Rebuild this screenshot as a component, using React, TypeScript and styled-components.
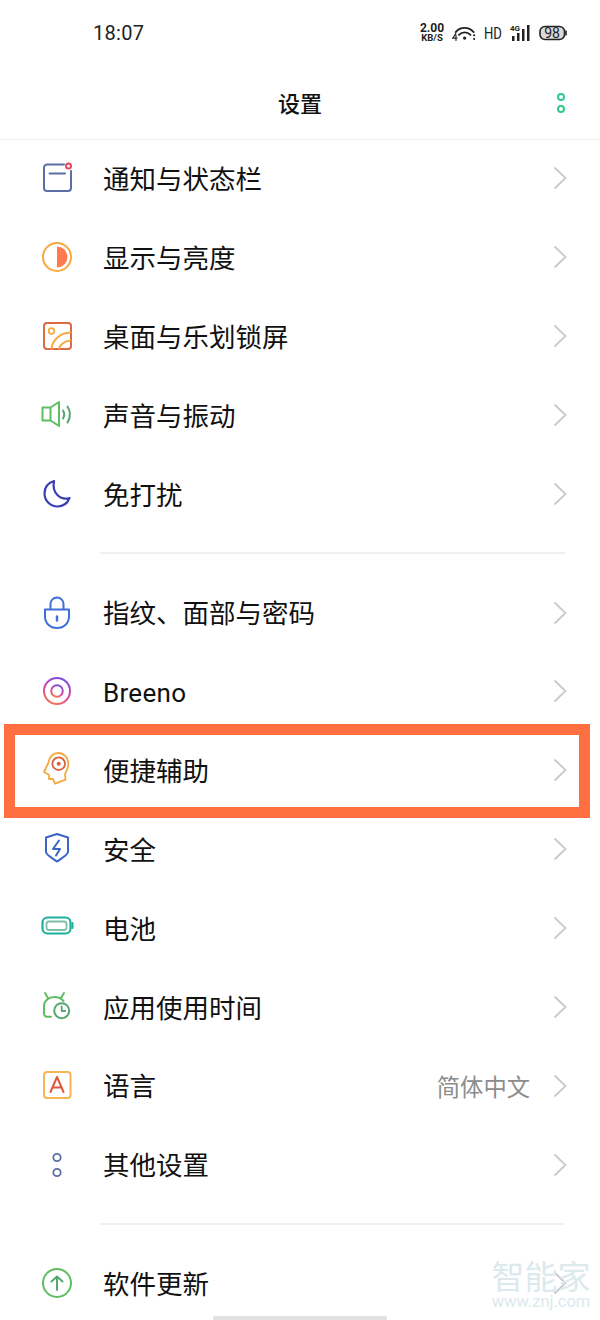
import React from 'react';
import styled, { createGlobalStyle } from 'styled-components';

const GlobalStyle = createGlobalStyle`
  html, body {
    margin: 0;
    padding: 0;
    background: #fff;
  }
`;

const CJK = `"Noto Sans CJK SC", "Noto Sans", sans-serif`;

const Screen = styled.div`
  position: relative;
  width: 600px;
  height: 1320px;
  overflow: hidden;
  background: #fff;
  font-family: ${CJK};
  color: #111;
`;

const StatusBar = styled.div`
  height: 66px;
  display: flex;
  align-items: center;
  justify-content: space-between;
  padding: 0 33px 0 93px;
  box-sizing: border-box;
`;

const Time = styled.span`
  font-family: "Roboto", sans-serif;
  font-size: 20px;
  color: #222;
  letter-spacing: 0.3px;
`;

const StatusIcons = styled.div`
  display: flex;
  align-items: center;
  gap: 8px;
`;

const Speed = styled.div`
  width: 24px;
  font-family: "Roboto", sans-serif;
  font-weight: 700;
  color: #222;
  display: flex;
  flex-direction: column;
  align-items: center;
  white-space: nowrap;
  font-size: 12px;
  line-height: 9px;
  small {
    margin-top: 1px;
    font-size: 9.5px;
    line-height: 8px;
    font-weight: 700;
  }
`;

const Hd = styled.span`
  width: 18px;
  font-family: "Roboto", sans-serif;
  font-size: 16px;
  color: #222;
  transform: scaleX(0.82);
  transform-origin: left center;
`;

const Header = styled.header`
  position: relative;
  height: 74px;
  display: flex;
  align-items: center;
  justify-content: center;
  padding-bottom: 2px;
  border-bottom: 1px solid #f1f1f1;
  box-sizing: border-box;
`;

const Title = styled.h1`
  margin: 0;
  font-size: 22px;
  font-weight: 500;
  line-height: 1;
`;

const MoreButton = styled.div`
  position: absolute;
  right: 35px;
  top: 27px;
  display: flex;
  flex-direction: column;
  gap: 4px;
  span {
    width: 8px;
    height: 8px;
    box-sizing: border-box;
    border: 2px solid #2fcb8d;
    border-radius: 50%;
  }
`;

const Row = styled.div`
  height: 78.85px;
  display: flex;
  align-items: center;
  padding: 0 33px 2px 41px;
  box-sizing: border-box;
`;

const IconBox = styled.div`
  width: 32px;
  height: 32px;
  flex: none;
  margin-right: 30px;
  svg {
    display: block;
    fill: none;
    overflow: visible;
  }
`;

const Label = styled.span`
  flex: 1;
  font-size: 26.5px;
  line-height: 1;
`;

const Latin = styled(Label)`
  padding-top: 3px;
  font-family: "Roboto", sans-serif;
  font-size: 26px;
  letter-spacing: 0.3px;
`;

const Value = styled.span`
  font-size: 23.3px;
  color: #8c8c8c;
  margin-right: 23px;
`;

const Divider = styled.div`
  height: 2px;
  margin: 18px 35px 20px 100px;
  background: #f0f0f0;
`;

const Highlight = styled.div`
  position: absolute;
  left: 4px;
  top: 724px;
  width: 586px;
  height: 94px;
  box-sizing: border-box;
  border: 11px solid #ff6f3f;
`;

const HomeBar = styled.div`
  position: absolute;
  left: 213px;
  bottom: 0;
  width: 174px;
  height: 4px;
  border-radius: 2px 2px 0 0;
  background: #e2e2e2;
`;

const Watermark = styled.div`
  position: absolute;
  left: 489px;
  top: 1258px;
  width: 104px;
  text-align: center;
  color: #dce9ed;
  span {
    display: block;
    font-size: 33px;
    line-height: 34px;
    white-space: nowrap;
  }
  small {
    display: block;
    margin-top: 1px;
    font-family: "Roboto", sans-serif;
    font-size: 16.5px;
    line-height: 18px;
    white-space: nowrap;
  }
`;

const Chevron = () => (
  <svg width="14" height="24" viewBox="0 0 14 24" fill="none" style={{ flex: 'none' }}>
    <path d="M1.5 1.5 12.5 12 1.5 22.5" stroke="#c9c9c9" strokeWidth="1.8" />
  </svg>
);

const Svg: React.FC<{ children: React.ReactNode }> = ({ children }) => (
  <svg width="32" height="32" viewBox="0 0 32 32" strokeLinecap="round" strokeLinejoin="round">
    {children}
  </svg>
);

const icons: Record<string, React.ReactNode> = {
  notify: (
    <Svg>
      <path d="M23 2.5H6a3 3 0 0 0-3 3V26a3 3 0 0 0 3 3h21a3 3 0 0 0 3-3V9" stroke="#5b6fa6" strokeWidth="2" />
      <path d="M8.5 11.5H24" stroke="#5b6fa6" strokeWidth="2" />
      <circle cx="27.5" cy="4" r="2.5" stroke="#e8435f" strokeWidth="2" />
    </Svg>
  ),
  display: (
    <Svg>
      <circle cx="16" cy="16" r="14" stroke="#f5a93f" strokeWidth="2" />
      <path d="M16 5.5a10.5 10.5 0 0 1 0 21z" fill="#ff7b4f" />
    </Svg>
  ),
  desktop: (
    <Svg>
      <rect x="3" y="3" width="27" height="26" rx="3" stroke="#dc6a42" strokeWidth="2" />
      <circle cx="10.5" cy="11" r="2.8" stroke="#f5a93f" strokeWidth="1.8" />
      <path d="M10.5 28.5C11.5 20 19 13 29.5 12.5M18 28.5C19 24.5 23.5 21 29.5 20.5" stroke="#f5a93f" strokeWidth="2" />
    </Svg>
  ),
  sound: (
    <Svg>
      <path d="M1.5 8.5h8v13h-8zM9.5 8.5 18 3v24l-8.5-5.5" stroke="#5fbd63" strokeWidth="2" />
      <path d="M22 11.5c1.5 2.5 1.5 5.5 0 8M26.5 7.5c3 4.8 3 11 0 16" stroke="#58a66f" strokeWidth="2" />
    </Svg>
  ),
  moon: (
    <Svg>
      <path d="M13 3C6.500 5 3.500 10 3.500 15.500 3.500 23 9.500 28.500 16.500 28.500c5.500 0 10-3.500 12-8.500-9 2.500-18-5-15.500-17z" stroke="#3b3fb6" strokeWidth="2.2" />
    </Svg>
  ),
  lock: (
    <Svg>
      <path d="M4 12.500H28V19.500C28 26 23 31 16 31S4 26 4 19.500Z" stroke="#3f6fd8" strokeWidth="2" />
      <path d="M9.500 12V7a6.500 6.500 0 0 1 13 0v5" stroke="#3f6fd8" strokeWidth="2" />
      <path d="M16 19.500v4" stroke="#3f6fd8" strokeWidth="2.4" />
    </Svg>
  ),
  breeno: (
    <Svg>
      <defs>
        <linearGradient id="breeno" x1="0.7" y1="0" x2="0.3" y2="1">
          <stop offset="0" stopColor="#7a4de0" />
          <stop offset="0.6" stopColor="#e0479f" />
          <stop offset="1" stopColor="#f0764f" />
        </linearGradient>
      </defs>
      <circle cx="16" cy="16" r="13" stroke="url(#breeno)" strokeWidth="2" />
      <circle cx="16" cy="16" r="5.8" stroke="url(#breeno)" strokeWidth="2" />
    </Svg>
  ),
  head: (
    <Svg>
      <path d="M7.300 9C8 3 12-1 17.300-1 23-1 27.300 3.500 27.300 10 27.300 14 25 18 24 20L24.500 25.700 14 29.700 12 25H8V20.700L3 18Z" stroke="#f5a93f" strokeWidth="1.8" />
      <circle cx="17.700" cy="9.700" r="6.300" stroke="#dc6042" strokeWidth="1.8" />
      <circle cx="17.700" cy="9.700" r="2" fill="#dc6042" />
    </Svg>
  ),
  shield: (
    <Svg>
      <path d="M16 1 27 4.500V19c0 3-7 6.500-11 9.500C12 25.500 5 22 5 19V4.500z" stroke="#3a65c4" strokeWidth="2" />
      <path d="M18 7.500 12 16h7l-4 6.500" stroke="#3a65c4" strokeWidth="2" />
    </Svg>
  ),
  battery: (
    <Svg>
      <rect x="1.500" y="5.500" width="28" height="16" rx="5" stroke="#1fb09c" strokeWidth="2.2" />
      <rect x="5.500" y="9.500" width="20" height="8.500" rx="2.500" stroke="#7fbfa9" strokeWidth="1.8" />
      <path d="M31.500 11v5" stroke="#1fb09c" strokeWidth="2" />
    </Svg>
  ),
  usage: (
    <Svg>
      <path d="M10 25.700H6a3 3 0 0 1-3-3V15C3 9.500 8 6 13.500 6c3.500 0 6.500 1 9 4M7 7 4 2M20 7l3-5" stroke="#5fbd63" strokeWidth="2" />
      <circle cx="20.700" cy="19.700" r="7.500" stroke="#58a66f" strokeWidth="2" />
      <path d="M20.700 15.500v4.500h3.500" stroke="#58a66f" strokeWidth="1.8" />
    </Svg>
  ),
  language: (
    <Svg>
      <rect x="3" y="2" width="26.500" height="26" rx="3" stroke="#f7b454" strokeWidth="2" />
      <path d="M9.500 22 16 7l6.500 15M11.500 17.500h9" stroke="#e2573a" strokeWidth="2" />
    </Svg>
  ),
  other: (
    <Svg>
      <circle cx="16" cy="8.500" r="3.700" stroke="#5b6fa6" strokeWidth="1.8" />
      <circle cx="16" cy="23.500" r="3.700" stroke="#5b6fa6" strokeWidth="1.8" />
    </Svg>
  ),
  update: (
    <Svg>
      <circle cx="16" cy="16" r="14" stroke="#5fbd63" strokeWidth="2" />
      <path d="M16 23V9.500M10.500 14.500 16 9.500l5.500 5" stroke="#58a66f" strokeWidth="2" />
    </Svg>
  ),
};

interface ItemProps {
  icon: string;
  label: string;
  value?: string;
}

const Item: React.FC<ItemProps> = ({ icon, label, value }) => (
  <Row>
    <IconBox>{icons[icon]}</IconBox>
    {label === 'Breeno' ? <Latin>{label}</Latin> : <Label>{label}</Label>}
    {value && <Value>{value}</Value>}
    <Chevron />
  </Row>
);

const group1: ItemProps[] = [
  { icon: 'notify', label: '通知与状态栏' },
  { icon: 'display', label: '显示与亮度' },
  { icon: 'desktop', label: '桌面与乐划锁屏' },
  { icon: 'sound', label: '声音与振动' },
  { icon: 'moon', label: '免打扰' },
];

const group2: ItemProps[] = [
  { icon: 'lock', label: '指纹、面部与密码' },
  { icon: 'breeno', label: 'Breeno' },
  { icon: 'head', label: '便捷辅助' },
  { icon: 'shield', label: '安全' },
  { icon: 'battery', label: '电池' },
  { icon: 'usage', label: '应用使用时间' },
  { icon: 'language', label: '语言', value: '简体中文' },
  { icon: 'other', label: '其他设置' },
];

export default function App() {
  return (
    <Screen>
      <GlobalStyle />
      <StatusBar>
        <Time>18:07</Time>
        <StatusIcons>
          <Speed>
            2.00
            <small>KB/S</small>
          </Speed>
          <svg width="24" height="18" viewBox="0 0 26 18" fill="none" stroke="#222" strokeLinecap="round">
            <path d="M4 8C9 2 18 2 23.500 8M7.500 11c3.500-3.500 9-3.500 12.500 0" strokeWidth="2" />
            <circle cx="13.700" cy="14.500" r="1.800" fill="#222" stroke="none" />
            <circle cx="24" cy="11.500" r="1.200" fill="#222" stroke="none" />
            <circle cx="24" cy="15.500" r="1.200" fill="#222" stroke="none" />
            <path d="M4 9.500 0.800 14.500H5.500M4.300 11v6" strokeWidth="1.2" />
          </svg>
          <Hd>HD</Hd>
          <svg width="21" height="18" viewBox="0 0 21 18" fill="#222">
            <rect x="2" y="12" width="2.500" height="5" />
            <rect x="7" y="9" width="2.500" height="8" />
            <rect x="12" y="5" width="2.500" height="12" />
            <rect x="17" y="1" width="2.500" height="16" />
            <text x="0" y="7" fontSize="8" fontWeight="700" fontFamily="Roboto, sans-serif">4G</text>
          </svg>
          <svg width="28" height="16" viewBox="0 0 28 16" fill="none">
            <rect x="1" y="1.500" width="24.500" height="13" rx="5" fill="#d9d9d9" stroke="#222" strokeWidth="1.6" />
            <path d="M27 5.500v5" stroke="#222" strokeWidth="1.6" />
            <text x="13" y="13" textAnchor="middle" fontSize="14" fill="#222" fontFamily="Roboto, sans-serif">98</text>
          </svg>
        </StatusIcons>
      </StatusBar>
      <Header>
        <Title>设置</Title>
        <MoreButton>
          <span />
          <span />
        </MoreButton>
      </Header>
      {group1.map(item => <Item key={item.label} {...item} />)}
      <Divider />
      {group2.map(item => <Item key={item.label} {...item} />)}
      <Divider />
      <Item icon="update" label="软件更新" />
      <Highlight />
      <Watermark>
        <span>智能家</span>
        <small>www.znj.com</small>
      </Watermark>
      <HomeBar />
    </Screen>
  );
}
